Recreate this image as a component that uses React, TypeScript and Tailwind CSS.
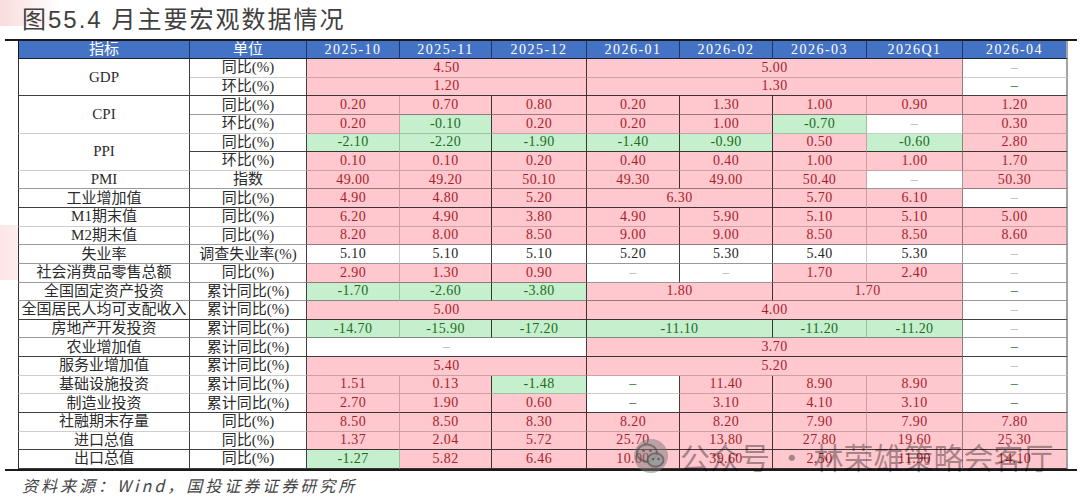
import React from "react";

type Kind = "p" | "g" | "w" | "d" | "l";
type C = [string, Kind, number?];
type Line = "d" | "l" | "m";
type Row = { name?: string; nameRows?: number; unit: string; bottom: Line; cells: C[] };

const BG: Record<Kind, string> = {
  p: "bg-[#ffc7ce] text-[#a61e2b]",
  g: "bg-[#c6efce] text-[#1d6b22]",
  w: "bg-white text-[#262626]",
  d: "bg-white text-[#1f7d25]",
  l: "bg-white text-[#a9bfa6]",
};
const VR: Record<Line, string> = {
  d: "border-r-black/75",
  l: "border-r-black/20",
  m: "border-r-black/40",
};
const HB: Record<Line, string> = {
  d: "border-b-black/75",
  l: "border-b-black/20",
  m: "border-b-black/40",
};
const SPAN: Record<number, string> = {
  1: "col-span-1",
  2: "col-span-2",
  3: "col-span-3",
  4: "col-span-4",
};
// right border type for the 10 grid columns
const COLV: Line[] = ["d", "d", "l", "d", "d", "d", "d", "l", "m", "m"];

const D = "–";

const rows: Row[] = [
  { name: "GDP", nameRows: 2, unit: "同比(%)", bottom: "l", cells: [["4.50", "p", 3], ["5.00", "p", 4], [D, "l"]] },
  { unit: "环比(%)", bottom: "d", cells: [["1.20", "p", 3], ["1.30", "p", 4], [D, "d"]] },
  {
    name: "CPI", nameRows: 2, unit: "同比(%)", bottom: "m",
    cells: [["0.20", "p"], ["0.70", "p"], ["0.80", "p"], ["0.20", "p"], ["1.30", "p"], ["1.00", "p"], ["0.90", "p"], ["1.20", "p"]],
  },
  {
    unit: "环比(%)", bottom: "l",
    cells: [["0.20", "p"], ["-0.10", "g"], ["0.20", "p"], ["0.20", "p"], ["1.00", "p"], ["-0.70", "g"], [D, "l"], ["0.30", "p"]],
  },
  {
    name: "PPI", nameRows: 2, unit: "同比(%)", bottom: "d",
    cells: [["-2.10", "g"], ["-2.20", "g"], ["-1.90", "g"], ["-1.40", "g"], ["-0.90", "g"], ["0.50", "p"], ["-0.60", "g"], ["2.80", "p"]],
  },
  {
    unit: "环比(%)", bottom: "l",
    cells: [["0.10", "p"], ["0.10", "p"], ["0.20", "p"], ["0.40", "p"], ["0.40", "p"], ["1.00", "p"], ["1.00", "p"], ["1.70", "p"]],
  },
  {
    name: "PMI", unit: "指数", bottom: "m",
    cells: [["49.00", "p"], ["49.20", "p"], ["50.10", "p"], ["49.30", "p"], ["49.00", "p"], ["50.40", "p"], [D, "l"], ["50.30", "p"]],
  },
  {
    name: "工业增加值", unit: "同比(%)", bottom: "d",
    cells: [["4.90", "p"], ["4.80", "p"], ["5.20", "p"], ["6.30", "p", 2], ["5.70", "p"], ["6.10", "p"], [D, "l"]],
  },
  {
    name: "M1期末值", unit: "同比(%)", bottom: "l",
    cells: [["6.20", "p"], ["4.90", "p"], ["3.80", "p"], ["4.90", "p"], ["5.90", "p"], ["5.10", "p"], ["5.10", "p"], ["5.00", "p"]],
  },
  {
    name: "M2期末值", unit: "同比(%)", bottom: "m",
    cells: [["8.20", "p"], ["8.00", "p"], ["8.50", "p"], ["9.00", "p"], ["9.00", "p"], ["8.50", "p"], ["8.50", "p"], ["8.60", "p"]],
  },
  {
    name: "失业率", unit: "调查失业率(%)", bottom: "m",
    cells: [["5.10", "w"], ["5.10", "w"], ["5.10", "w"], ["5.20", "w"], ["5.30", "w"], ["5.40", "w"], ["5.30", "w"], [D, "l"]],
  },
  {
    name: "社会消费品零售总额", unit: "同比(%)", bottom: "m",
    cells: [["2.90", "p"], ["1.30", "p"], ["0.90", "p"], [D, "l"], [D, "l"], ["1.70", "p"], ["2.40", "p"], [D, "l"]],
  },
  {
    name: "全国固定资产投资", unit: "累计同比(%)", bottom: "m",
    cells: [["-1.70", "g"], ["-2.60", "g"], ["-3.80", "g"], ["1.80", "p", 2], ["1.70", "p", 2], [D, "d"]],
  },
  { name: "全国居民人均可支配收入", unit: "累计同比(%)", bottom: "d", cells: [["5.00", "p", 3], ["4.00", "p", 4], [D, "l"]] },
  {
    name: "房地产开发投资", unit: "累计同比(%)", bottom: "m",
    cells: [["-14.70", "g"], ["-15.90", "g"], ["-17.20", "g"], ["-11.10", "g", 2], ["-11.20", "g"], ["-11.20", "g"], [D, "l"]],
  },
  { name: "农业增加值", unit: "累计同比(%)", bottom: "d", cells: [[D, "l", 3], ["3.70", "p", 4], [D, "d"]] },
  { name: "服务业增加值", unit: "累计同比(%)", bottom: "l", cells: [["5.40", "p", 3], ["5.20", "p", 4], [D, "l"]] },
  {
    name: "基础设施投资", unit: "累计同比(%)", bottom: "l",
    cells: [["1.51", "p"], ["0.13", "p"], ["-1.48", "g"], [D, "d"], ["11.40", "p"], ["8.90", "p"], ["8.90", "p"], [D, "d"]],
  },
  {
    name: "制造业投资", unit: "累计同比(%)", bottom: "d",
    cells: [["2.70", "p"], ["1.90", "p"], ["0.60", "p"], [D, "d"], ["3.10", "p"], ["4.10", "p"], ["3.10", "p"], [D, "d"]],
  },
  {
    name: "社融期末存量", unit: "同比(%)", bottom: "l",
    cells: [["8.50", "p"], ["8.50", "p"], ["8.30", "p"], ["8.20", "p"], ["8.20", "p"], ["7.90", "p"], ["7.90", "p"], ["7.80", "p"]],
  },
  {
    name: "进口总值", unit: "同比(%)", bottom: "d",
    cells: [["1.37", "p"], ["2.04", "p"], ["5.72", "p"], ["25.70", "p"], ["13.80", "p"], ["27.80", "p"], ["19.60", "p"], ["25.30", "p"]],
  },
  {
    name: "出口总值", unit: "同比(%)", bottom: "d",
    cells: [["-1.27", "g"], ["5.82", "p"], ["6.46", "p"], ["10.00", "p"], ["39.60", "p"], ["2.50", "p"], ["11.90", "p"], ["14.10", "p"]],
  },
];

const headers = ["指标", "单位", "2025-10", "2025-11", "2025-12", "2026-01", "2026-02", "2026-03", "2026Q1", "2026-04"];

function WeChatIcon() {
  return (
    <svg width="42" height="36" viewBox="0 0 42 36">
      <circle cx="21" cy="18" r="17" fill="#7a7a7a" fillOpacity="0.5" />
      <ellipse cx="17" cy="15" rx="10" ry="8.5" fill="none" stroke="#4d4d4d" strokeOpacity="0.6" strokeWidth="2" />
      <circle cx="13.5" cy="12.5" r="1.5" fill="#4d4d4d" fillOpacity="0.7" />
      <circle cx="20.5" cy="12.5" r="1.5" fill="#4d4d4d" fillOpacity="0.7" />
      <ellipse cx="25.5" cy="22" rx="8" ry="6.8" fill="#9a9a9a" fillOpacity="0.85" stroke="#4d4d4d" strokeOpacity="0.6" strokeWidth="2" />
      <circle cx="23" cy="21" r="1.2" fill="#4d4d4d" fillOpacity="0.8" />
      <circle cx="28.5" cy="21" r="1.2" fill="#4d4d4d" fillOpacity="0.8" />
    </svg>
  );
}

export default function App() {
  const cells: React.ReactNode[] = [];
  headers.forEach((h, i) => {
    const first = i === 0 ? "border-l border-l-black/80" : "";
    const last = i === 9 ? "border-r-2 border-r-[#a3a3a3]" : "border-r border-r-[#1f3763]";
    const font = i < 2 ? "text-[15px]" : "text-[14px] tracking-[1.5px]";
    cells.push(
      <div
        key={"h" + i}
        className={`flex items-center justify-center bg-[#4472c4] text-white border-b border-b-black/70 leading-none ${first} ${last} ${font}`}
      >
        {h}
      </div>
    );
  });

  rows.forEach((r, i) => {
    if (r.name !== undefined) {
      const span = r.nameRows ?? 1;
      const bottom = rows[i + span - 1].bottom;
      cells.push(
        <div
          key={"n" + i}
          className={`flex items-center justify-center bg-white text-[#2b2b2b] text-[15px] leading-none border-l border-l-black/80 border-r border-b ${span === 2 ? "row-span-2" : ""} ${VR.d} ${HB[bottom]}`}
        >
          {r.name}
        </div>
      );
    }
    cells.push(
      <div
        key={"u" + i}
        className={`flex items-center justify-center bg-white text-[#2b2b2b] text-[15px] leading-none border-r border-b ${VR.d} ${HB[r.bottom]}`}
      >
        {r.unit}
      </div>
    );
    let col = 2;
    r.cells.forEach(([v, k, s], j) => {
      const sp = s ?? 1;
      const endCol = col + sp - 1;
      col += sp;
      const right = endCol === 9 ? "border-r-2 border-r-[#a3a3a3]" : `border-r ${VR[COLV[endCol]]}`;
      cells.push(
        <div
          key={"c" + i + "-" + j}
          className={`flex items-center justify-center text-[14px] tracking-[0.4px] leading-none border-b ${SPAN[sp]} ${BG[k]} ${right} ${HB[r.bottom]}`}
        >
          {v}
        </div>
      );
    });
  });

  return (
    <div className="relative w-[1080px] h-[500px] overflow-hidden bg-white font-['Liberation_Serif','Noto_Sans_CJK_SC',serif]">
      <div className="pointer-events-none absolute left-0 top-0 h-[26px] w-[60px] bg-linear-to-r from-[#f8d3d3] to-transparent opacity-80" />
      <div className="pointer-events-none absolute left-0 top-[225px] h-[55px] w-[55px] bg-linear-to-r from-[#fbdada] to-transparent opacity-70" />

      <div className="relative flex h-[39px] items-center pl-[22px] pt-[1px] text-[24px] leading-none tracking-[2px] text-[#404040] font-['Liberation_Sans','Noto_Sans_CJK_SC',sans-serif]">
        图55.4 月主要宏观数据情况
      </div>
      <div className="relative ml-[5px] h-[2px] w-[1072px] bg-[#1a1a1a]" />
      <div className="relative ml-[18px] grid w-[1050px] grid-cols-[172px_117px_93px_92px_95px_93px_93px_94px_96px_105px] grid-rows-[18px_repeat(22,18.64px)]">
        {cells}
      </div>
      <div className="relative ml-[5px] h-[2px] w-[1072px] bg-[#1a1a1a]" />
      <div className="relative pl-[22px] pt-[6px] text-[16px] italic leading-none tracking-[3px] text-[#444] font-['Noto_Sans_CJK_SC',sans-serif]">
        资料来源：Wind，国投证券证券研究所
      </div>

      <div className="pointer-events-none absolute left-[630px] top-[438px] flex items-center gap-[8px] text-[30px] leading-none text-black/35 font-['Noto_Sans_CJK_SC',sans-serif]">
        <WeChatIcon />
        <span>公众号 · 林荣雄策略会客厅</span>
      </div>
    </div>
  );
}
